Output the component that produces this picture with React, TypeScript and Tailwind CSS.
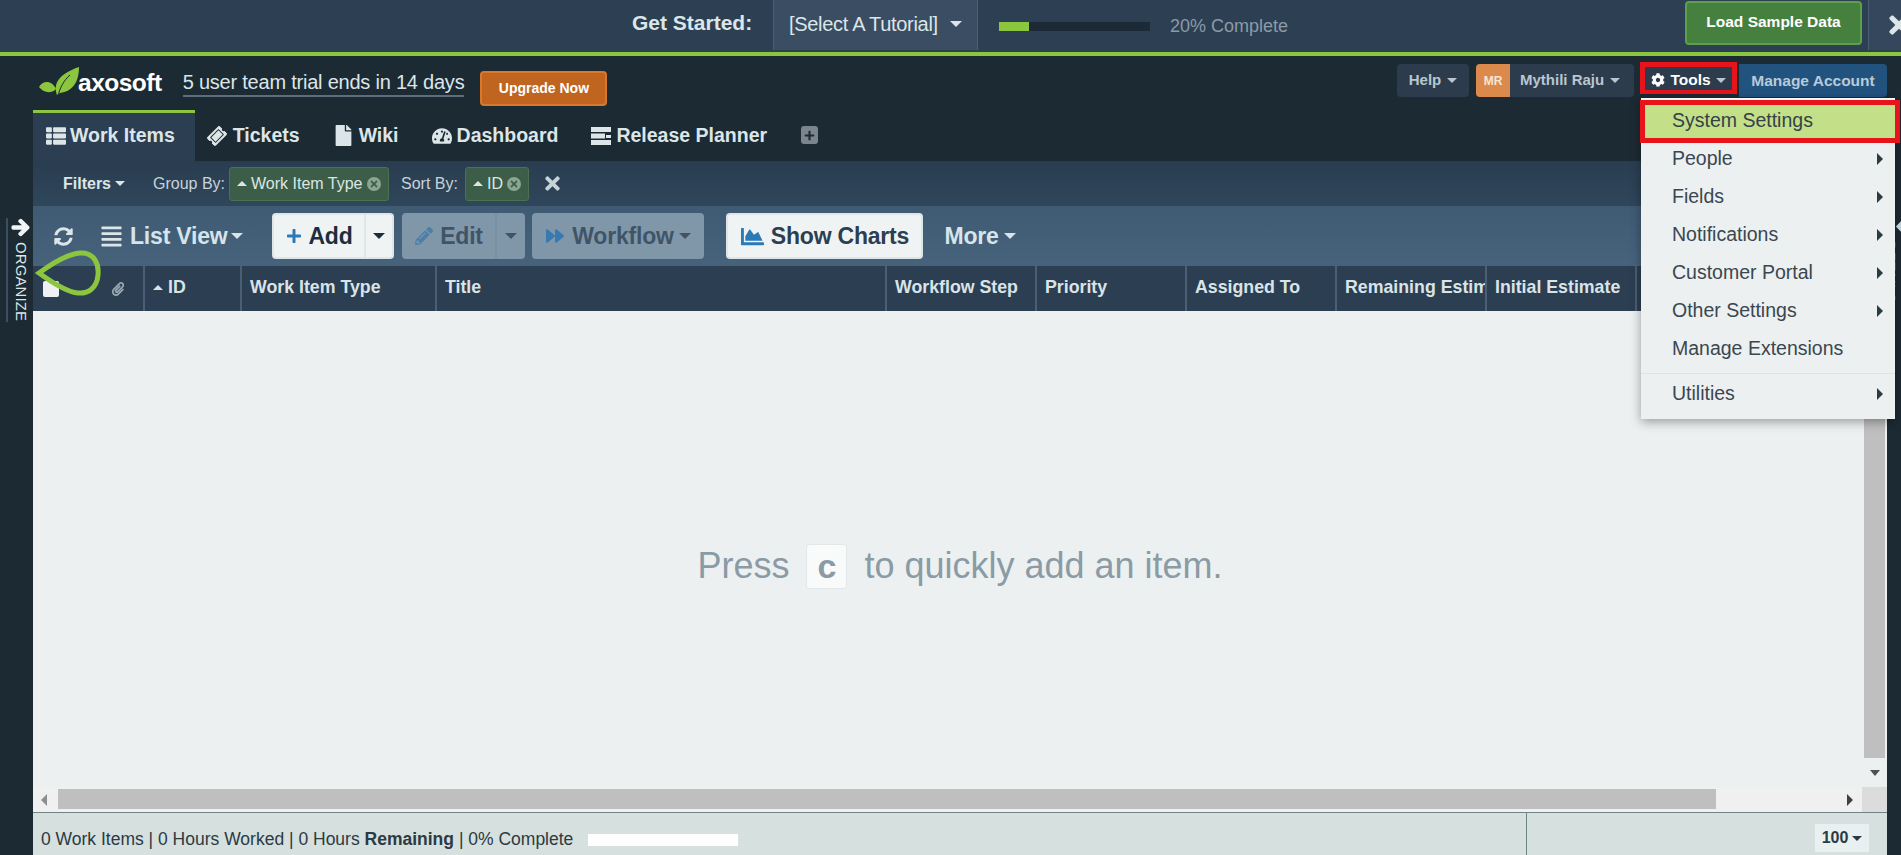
import type { ReactNode } from "react";
import { FaAlignJustify, FaThList, FaTicketAlt, FaFile, FaTachometerAlt, FaSyncAlt, FaPencilAlt, FaForward, FaChartArea, FaCog, FaPaperclip, FaArrowRight, FaArrowLeft, FaTimes, FaPlus } from "react-icons/fa";

const font = "font-['Liberation_Sans',Arial,sans-serif]";

function Caret({ className = "" }: { className?: string }) {
  return <span className={`inline-block h-0 w-0 shrink-0 border-x-[5px] border-t-[5px] border-x-transparent border-t-current ${className}`} />;
}

function UpTri({ className = "" }: { className?: string }) {
  return <span className={`inline-block h-0 w-0 shrink-0 border-x-[5px] border-b-[5px] border-x-transparent border-b-current ${className}`} />;
}

function RightTri() {
  return <span className="h-0 w-0 border-y-[6px] border-l-[6px] border-y-transparent border-l-[#2c3a42]" />;
}

function Logo() {
  return (
    <svg width="41" height="30" viewBox="0 0 41 30">
      <path d="M18 28 C14 16 20 7 40 0 C40 12 36 24 21 26 Z" fill="#8cc63f" />
      <path d="M0 20 C4 13 13 13 17 22 C12 27 5 26 0 20 Z" fill="#8cc63f" />
      <path d="M19 30 C20 22 25 13 31 8" stroke="#1c2a33" strokeWidth="1" fill="none" />
    </svg>
  );
}

function PlannerIcon() {
  return (
    <svg width="20" height="20" viewBox="0 0 20 20" fill="#dce6e8">
      <rect x="0" y="1" width="20" height="5" />
      <rect x="0" y="7.5" width="14" height="5" />
      <rect x="15" y="9" width="5" height="3" />
      <rect x="0" y="14" width="20" height="5" />
    </svg>
  );
}

function Tab({ icon, label, gap, active = false }: { icon: ReactNode; label: string; gap: string; active?: boolean }) {
  return (
    <div className={`flex h-[51px] items-center border-t-[3px] pb-[3px] pl-[13px] pr-[20px] text-[19.5px] font-bold text-[#dce6e8] ${gap} ${active ? "border-[#8cc63f] bg-[#2c3e52]" : "border-transparent"}`}>
      {icon}
      {label}
    </div>
  );
}

function Chip({ label, width }: { label: string; width: string }) {
  return (
    <div className={`flex h-[34px] items-center rounded-[3px] border border-[#4d7050] bg-[#3c5e48] pl-[7px] text-[16px] text-[#dbe6e4] ${width}`}>
      <UpTri className="mr-[4px] border-x-[5px]" />
      {label}
      <span className="ml-auto mr-[7px] flex h-[14px] w-[14px] items-center justify-center rounded-full bg-[#8ba593] text-[#3c5e48]">
        <FaTimes className="text-[10px]" />
      </span>
    </div>
  );
}

function HeaderCell({ label, width, children }: { label?: string; width: string; children?: ReactNode }) {
  return (
    <div className={`flex h-full shrink-0 items-center overflow-hidden whitespace-nowrap border-r-2 border-[#4a5f73] pb-[3px] pl-[8px] text-[17.75px] font-bold text-[#d9e4e8] ${width}`}>
      {children}
      {label}
    </div>
  );
}

function MenuItem({ label, arrow = true }: { label: string; arrow?: boolean }) {
  return (
    <div className="flex h-[38px] items-center justify-between pl-[31px] pr-[12px] text-[19.5px] text-[#3a4750]">
      {label}
      {arrow && <RightTri />}
    </div>
  );
}

export default function App() {
  return (
    <div className={`relative flex h-[855px] w-[1901px] flex-col overflow-hidden bg-[#1c2a33] ${font}`}>
      {/* tutorial bar */}
      <div className="flex h-[52px] shrink-0 items-center bg-[#2d4053] pl-[632px]">
        <div className="w-[141px] shrink-0 pb-[6px] text-[21px] font-bold text-[#dce6e8]">Get Started:</div>
        <div className="flex h-[50px] w-[205px] shrink-0 items-center gap-[12px] self-start border-x border-[#4a5f73] bg-[#3a4d63] pb-[2px] pl-[15px] text-[20px] tracking-[-0.3px] text-[#dce6e8]">
          [Select A Tutorial]
          <Caret className="border-x-[6px] border-t-[6px]" />
        </div>
        <div className="ml-[21px] h-[9px] w-[151px] shrink-0 bg-[#1c2a38]">
          <div className="h-full w-[30px] bg-[#8cc63f]" />
        </div>
        <div className="ml-[20px] whitespace-nowrap text-[18px] text-[#8b9ba8]">20% Complete</div>
        <div className="ml-auto mt-[1px] flex h-[44px] w-[177px] shrink-0 items-center justify-center self-start rounded-[4px] border-2 border-[#5da04a] bg-[#46803f] pb-[2px] text-[15.5px] font-bold text-white">Load Sample Data</div>
        <div className="ml-[6px] flex h-[50px] w-[33px] shrink-0 items-center self-start border-l border-[#4a5f73] bg-[#34475c] pl-[16px] text-[28px] text-[#dce6e8]">
          <FaTimes className="shrink-0" />
        </div>
      </div>
      <div className="h-1 shrink-0 bg-[#8cc63f]" />

      <div className="flex min-h-0 flex-1">
        {/* organize rail */}
        <div className="relative flex w-[33px] shrink-0 flex-col items-center pl-[8px] pt-[162px]">
          <div className="absolute left-[6px] top-[162px] h-[104px] w-[2px] bg-[#3d4f5e]" />
          <FaArrowRight className="text-[19px] text-[#f2f5f5]" stroke="currentColor" strokeWidth={40} />
          <div className="mt-[5px] text-[15px] tracking-[0.1px] text-[#dce6e8] [writing-mode:vertical-rl]">ORGANIZE</div>
        </div>

        <div className="flex min-w-0 flex-1 flex-col">
          {/* header */}
          <div className="flex h-[54px] shrink-0 items-start">
            <div className="ml-[6px] mt-[11px] flex items-start">
              <Logo />
              <span className="ml-[-2px] mt-[1px] text-[24.5px] font-bold leading-[30px] tracking-[-0.5px] text-white">axosoft</span>
            </div>
            <span className="ml-[21px] mt-[14px] border-b-2 border-[#5c6d7b] text-[20px] leading-[25px] tracking-[-0.22px] text-[#dce6e8]">5 user team trial ends in 14 days</span>
            <div className="ml-[16px] mt-[15px] flex h-[35px] w-[127px] items-center justify-center rounded-[4px] border-2 border-[#d9772b] bg-[#bf6520] text-[14px] font-bold text-white">Upgrade Now</div>

            <div className="ml-auto mt-[8px] flex items-start text-[15px] font-bold text-[#b9c6d0]">
              <div className="mr-[7px] flex h-[33px] w-[72px] items-center justify-center gap-[6px] rounded-[4px] bg-[#2c3c4d]">
                Help <Caret />
              </div>
              <div className="mr-[6px] flex h-[33px] w-[158px] items-center rounded-[4px] bg-[#2c3c4d]">
                <span className="flex h-full w-[34px] items-center justify-center rounded-l-[4px] bg-[#dc8a4b] text-[12px] text-[#f6e6d8]">MR</span>
                <span className="ml-[10px]">Mythili Raju</span>
                <Caret className="ml-[6px]" />
              </div>
              <div className="mr-[2px] mt-[-2px] flex h-[32px] w-[97px] items-center justify-center gap-[5px] border-[5px] border-b-[4px] border-[#e8141c] bg-[#2c3c4d] pt-[3px] text-[15.5px] text-white">
                <FaCog className="shrink-0 text-[14px]" /> Tools <Caret className="text-[#b9c6d0]" />
              </div>
              <div className="flex h-[33px] w-[148px] items-center justify-center rounded-r-[4px] bg-[#22537f] text-[15.5px] text-[#b9cad8]">Manage Account</div>
            </div>
          </div>

          {/* tabs */}
          <div className="flex h-[51px] shrink-0 items-end">
            <Tab active gap="gap-[4px]" icon={<FaThList className="text-[20px]" />} label="Work Items" />
            <Tab gap="gap-[7px]" icon={<FaTicketAlt className="-rotate-45 text-[18px]" />} label="Tickets" />
            <Tab gap="gap-[5px]" icon={<FaFile className="text-[21px]" />} label="Wiki" />
            <Tab gap="gap-[5px]" icon={<FaTachometerAlt className="text-[20px]" />} label="Dashboard" />
            <Tab gap="gap-[5px]" icon={<PlannerIcon />} label="Release Planner" />
            <div className="mb-[17px] ml-[14px] flex h-[18px] w-[17px] items-center justify-center rounded-[3px] bg-[#7a858e] text-[#1c2a33]">
              <FaPlus className="text-[11px]" />
            </div>
          </div>

          {/* filters */}
          <div className="flex h-[45px] shrink-0 items-center bg-gradient-to-b from-[#2a3d50] to-[#2f465b] pl-[30px] text-[16px]">
            <span className="font-bold text-[#dce6e8]">Filters</span>
            <Caret className="ml-[4px] border-x-[4px] border-t-[4px] text-[#dce6e8]" />
            <span className="ml-[28px] mr-[4px] text-[#c7d3d9]">Group By:</span>
            <Chip label="Work Item Type" width="w-[160px]" />
            <span className="ml-[12px] mr-[7px] text-[#c7d3d9]">Sort By:</span>
            <Chip label="ID" width="w-[64px]" />
            <FaTimes className="ml-[13px] text-[21px] text-[#c7d3d9]" />
          </div>

          {/* toolbar */}
          <div className="flex h-[60px] shrink-0 items-center bg-gradient-to-b from-[#3f5a73] to-[#47637c] pl-[21px] text-[23px] font-bold tracking-[-0.2px]">
            <FaSyncAlt className="text-[19px] text-[#dce6e8]" />
            <FaAlignJustify className="ml-[27px] text-[23px] text-[#dce6e8]" />
            <span className="ml-[7px] text-[#d6e5ea]">List View</span>
            <Caret className="ml-[4px] border-x-[6px] border-t-[6px] text-[#d6e5ea]" />
            <div className="ml-[29px] flex h-[46px] w-[122px] items-stretch rounded-[4px] border-2 border-[#dfe6e8] bg-[#f0f3f4]">
              <div className="flex w-[90px] items-center justify-center gap-[6px] text-[#1c2e3e]">
                <FaPlus className="text-[16px] text-[#2a7ab8]" />
                Add
              </div>
              <div className="flex flex-1 items-center justify-center border-l-2 border-[#dfe6e8] text-[#1c2e3e]"><Caret className="border-x-[6px] border-t-[6px]" /></div>
            </div>
            <div className="ml-[8px] flex h-[46px] w-[123px] items-stretch rounded-[4px] bg-[#8097aa] text-[#3f5567]">
              <div className="flex w-[93px] items-center justify-center gap-[7px]">
                <FaPencilAlt className="text-[18px] text-[#4d7ea8]" />Edit
              </div>
              <div className="flex flex-1 items-center justify-center border-l-2 border-[#7a90a3]"><Caret className="border-x-[6px] border-t-[6px]" /></div>
            </div>
            <div className="ml-[7px] flex h-[46px] w-[172px] items-center justify-center gap-[8px] rounded-[4px] bg-[#8097aa] text-[#3f5567]">
              <FaForward className="text-[18px] text-[#3a79b0]" />Workflow<Caret className="ml-[-3px] border-x-[6px] border-t-[6px]" />
            </div>
            <div className="ml-[22px] flex h-[46px] w-[197px] items-center justify-center gap-[7px] rounded-[4px] border-2 border-[#dfe6e8] bg-[#f0f3f4] text-[#2c3e50]">
              <FaChartArea className="text-[23px] text-[#2a7ab8]" />Show Charts
            </div>
            <span className="ml-[21px] text-[#d6e5ea]">More</span>
            <Caret className="ml-[5px] border-x-[6px] border-t-[6px] text-[#d6e5ea]" />
          </div>

          {/* grid header */}
          <div className="flex h-[45px] shrink-0 items-center bg-[#2c3e52]">
            <div className="flex h-full w-[112px] shrink-0 items-center border-r-2 border-[#4a5f73] pl-[10px]">
              <span className="h-[16px] w-[16px] rounded-[2px] bg-[#eef0f2]" />
              <FaPaperclip className="ml-[52px] text-[14px] text-[#9aa8b2]" />
            </div>
            <HeaderCell width="w-[97px]" label="ID"><UpTri className="mr-[5px]" /></HeaderCell>
            <HeaderCell width="w-[195px]" label="Work Item Type" />
            <HeaderCell width="w-[450px]" label="Title" />
            <HeaderCell width="w-[150px]" label="Workflow Step" />
            <HeaderCell width="w-[150px]" label="Priority" />
            <HeaderCell width="w-[150px]" label="Assigned To" />
            <HeaderCell width="w-[150px]" label="Remaining Estimate" />
            <HeaderCell width="w-[150px]" label="Initial Estimate" />
          </div>

          {/* grid body */}
          <div className="relative flex min-h-0 flex-1 flex-col bg-[#ecf0f1]">
            <div className="flex flex-1 items-center justify-center pt-[34px]">
              <div className="flex items-center text-[36px] text-[#8a9ba6]">
                Press
                <span className="mx-[17px] flex h-[45px] w-[41px] items-center justify-center rounded-[3px] border border-[#e2e7e9] bg-[#f9fbfb] text-[34px] font-bold">c</span>
                to quickly add an item.
              </div>
            </div>
            {/* scrollbars */}
            <div className="absolute right-[2px] top-0 flex h-[476px] w-[21px] flex-col items-center justify-end pb-[11px]">
              <span className="absolute left-0 top-0 h-[447px] w-full bg-[#bfbfbf]" />
              <span className="h-0 w-0 border-x-[5px] border-t-[6px] border-x-transparent border-t-[#505050]" />
            </div>
            <div className="flex h-[25px] shrink-0 items-center bg-[#f0f0f0]">
              <span className="ml-[8px] h-0 w-0 border-y-[6px] border-r-[6px] border-y-transparent border-r-[#8a8f92]" />
              <div className="ml-[11px] mt-[2px] h-[20px] w-[1658px] self-start bg-[#bfbfbf]" />
              <span className="ml-auto mr-[9px] h-0 w-0 border-y-[6px] border-l-[6px] border-y-transparent border-l-[#404040]" />
              <div className="h-full w-[25px] bg-[#dcdcdc]" />
            </div>
          </div>

          {/* status */}
          <div className="flex h-[43px] shrink-0 items-center border-t border-[#6f8583] bg-[#d5e0df] pl-[8px] text-[17.5px] text-[#2c3a42]">
            <span className="mt-[11px]">0 Work Items | 0 Hours Worked | 0 Hours <b>Remaining</b> | 0% Complete</span>
            <div className="ml-[15px] mt-[11px] h-[12px] w-[150px] bg-white" />
            <div className="ml-auto flex h-full w-[361px] items-center justify-end border-l border-[#6f8583] pr-[18px]">
              <div className="mt-[8px] flex h-[28px] w-[54px] items-center justify-center gap-[4px] bg-[#e9f0f1] text-[16px] font-bold">100<Caret className="border-x-[4px] border-t-[4px]" /></div>
            </div>
          </div>
        </div>

        {/* details rail, clipped by the window edge */}
        <div className="flex w-[14px] shrink-0 flex-col pl-[8px] pt-[162px]">
          <FaArrowLeft className="shrink-0 text-[17px] text-[#cfe3ee]" />
          <div className="mt-[6px] whitespace-nowrap text-[15px] text-[#dce6e8] [writing-mode:vertical-rl]">DETAILS</div>
        </div>
      </div>

      {/* tools dropdown */}
      <div className="absolute left-[1641px] top-[98px] w-[254px] border-t-2 border-[#f6f8f8] bg-[#ecf0f1] pb-[6px] pt-[2px] shadow-[0_3px_10px_rgba(0,0,0,0.35)]">
        <div className="relative flex h-[38px] items-center pl-[31px] text-[19.5px] text-[#33424a]">
          <div className="absolute left-[-1px] top-[-2px] h-[43px] w-[260px] border-[5px] border-[#e8141c] bg-[#c3df87]" />
          <span className="relative">System Settings</span>
        </div>
        <MenuItem label="People" />
        <MenuItem label="Fields" />
        <MenuItem label="Notifications" />
        <MenuItem label="Customer Portal" />
        <MenuItem label="Other Settings" />
        <MenuItem label="Manage Extensions" arrow={false} />
        <div className="mb-[1px] mt-[5px] h-px bg-[#dfe3e5]" />
        <MenuItem label="Utilities" />
      </div>

      {/* annotation loop */}
      <svg className="absolute left-[30px] top-[245px]" width="75" height="55" viewBox="0 0 75 55" fill="none">
        <path d="M9 28 C20 20 38 9 50 8 C65 7 69 20 68 30 C67 43 58 49 48 48 C36 47 20 36 9 28 Z" stroke="#8cc63f" strokeWidth="5" />
      </svg>
    </div>
  );
}
